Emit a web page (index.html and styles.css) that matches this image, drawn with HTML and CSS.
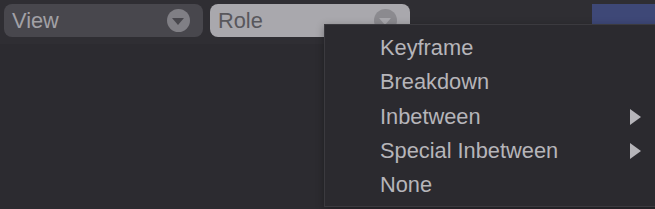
FILE: index.html
```html
<!DOCTYPE html>
<html lang="en">

<head>
    <meta charset="UTF-8">
    <title>Role Menu</title>
    <link rel="stylesheet" href="styles.css">
</head>

<body>

    <div class="toolbar">
        <div class="select select-view">
            <span>View</span>
            <span class="drop-icon"></span>
        </div>
        <div class="select select-role">
            <span>Role</span>
            <span class="drop-icon"></span>
        </div>
        <div class="swatch"></div>
    </div>

    <div class="workspace"></div>

    <!-- popup for the Role select -->
    <ul class="menu">
        <li class="menu-item">Keyframe</li>
        <li class="menu-item">Breakdown</li>
        <li class="menu-item">Inbetween <span class="arrow"></span></li>
        <li class="menu-item">Special Inbetween <span class="arrow"></span></li>
        <li class="menu-item">None</li>
    </ul>

</body>

</html>
```

FILE: styles.css
```css
html,
body {
    overflow: hidden;
}

body {
    margin: 0;
    background-color: #2c2b30;
    font-family: "Liberation Sans", Arial, sans-serif;
    font-size: 21.8px;
    height: 209px;
}

.toolbar {
    display: flex;
    gap: 7px;
    height: 44px;
    padding: 3.5px 0 0 4px;
    box-sizing: border-box;
    background-color: #2f2e33;
}

.select {
    display: flex;
    align-items: center;
    justify-content: space-between;
    width: 199px;
    height: 33px;
    padding: 1px 13px 0 8px;
    box-sizing: border-box;
    border-radius: 8px;
}

.select-view {
    background-color: #48474d;
    color: #a2a1a6;
}

.select-role {
    width: 200px;
    background-color: #a9a8ad;
    color: #58575c;
}

.drop-icon {
    position: relative;
    width: 23px;
    height: 23px;
    border-radius: 50%;
}

.drop-icon::after {
    content: "";
    position: absolute;
    left: 5px;
    top: 9px;
    border-left: 6.5px solid transparent;
    border-right: 6.5px solid transparent;
    border-top: 7px solid;
}

.select-view .drop-icon {
    background-color: #807f85;
}

.select-view .drop-icon::after {
    border-top-color: #48474d;
}

.select-role .drop-icon {
    background-color: #8b8a8f;
}

.select-role .drop-icon::after {
    border-top-color: #a9a8ad;
}

.swatch {
    margin-left: auto;
    width: 63px;
    height: 33px;
    background-color: #3e4877;
}

.menu {
    position: absolute;
    top: 24px;
    left: 324px;
    width: 340px;
    margin: 0;
    padding: 6px 22px 4px 55px;
    box-sizing: border-box;
    list-style: none;
    background-color: #2b2a2f;
    border: 1px solid #3b3a3f;
    box-shadow: 0 2px 8px rgba(0, 0, 0, 0.3);
    color: #b6b5ba;
}

.menu-item {
    display: flex;
    align-items: center;
    justify-content: space-between;
    line-height: 34.25px;
}

.arrow {
    width: 0;
    height: 0;
    border-left: 11px solid #b6b5ba;
    border-top: 8px solid transparent;
    border-bottom: 8px solid transparent;
}
```
